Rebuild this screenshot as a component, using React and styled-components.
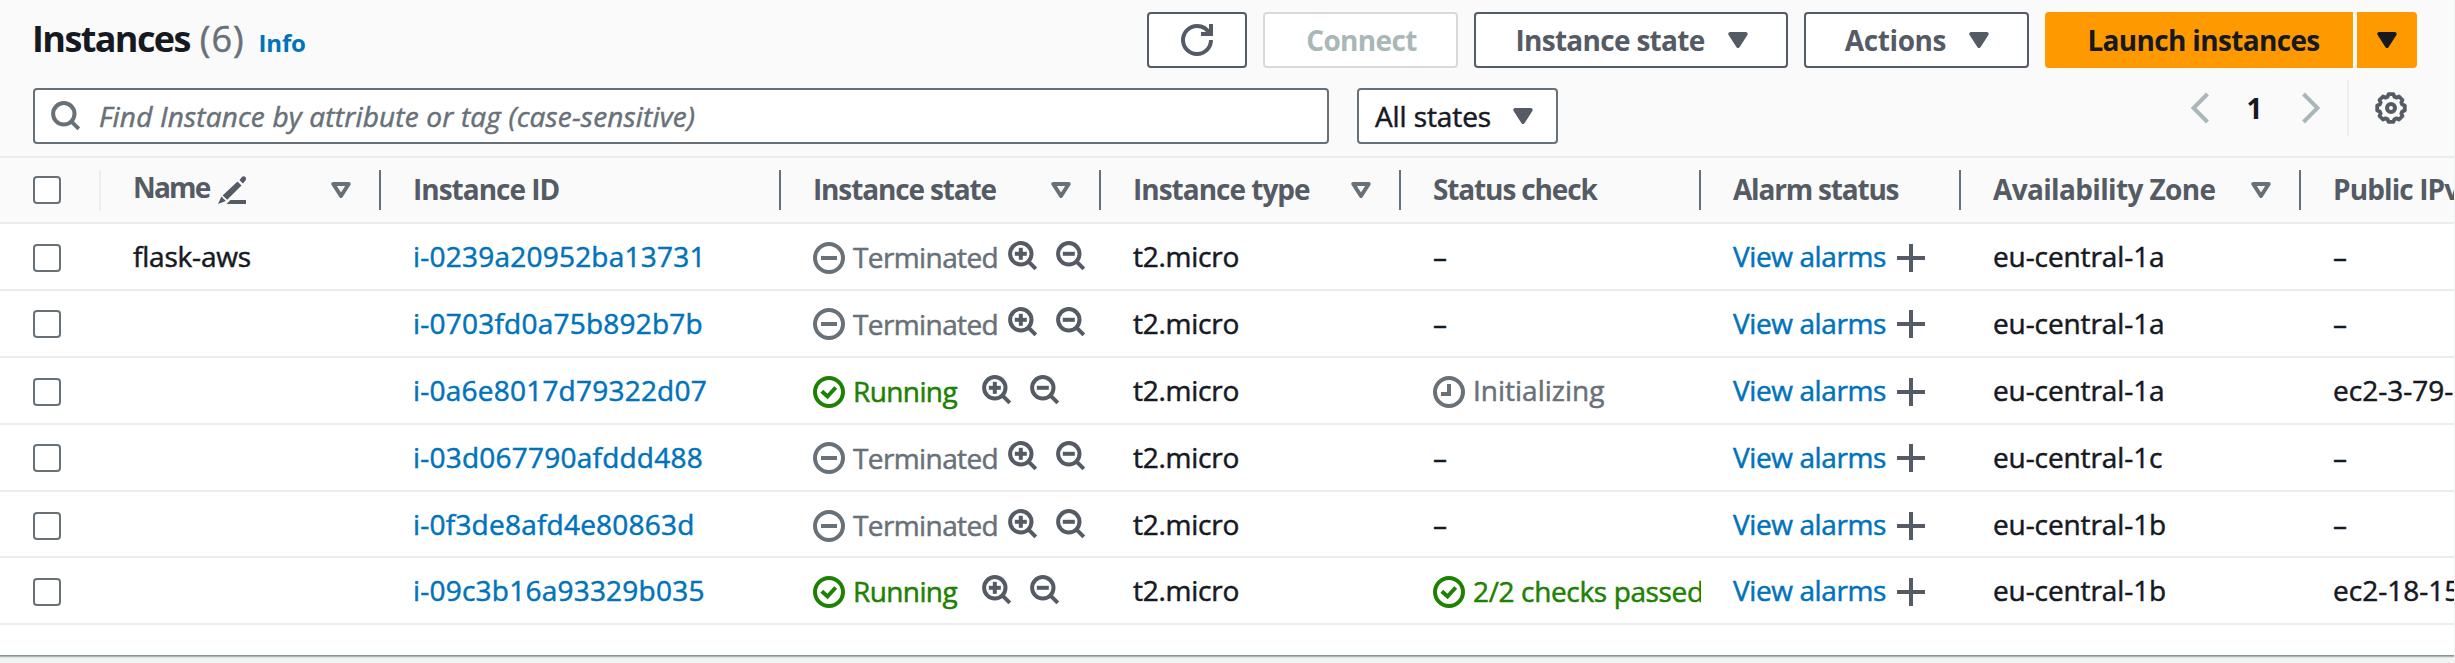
import React from "react";
import styled, { createGlobalStyle, css } from "styled-components";

const c = {
  ink: "#16191f",
  slate: "#545b64",
  gray: "#687078",
  link: "#0073bb",
  green: "#1d8102",
  orange: "#ff9900",
  line: "#eaeded",
  disabled: "#aab7b8",
  surface: "#fafafa",
};

const GlobalStyle = createGlobalStyle`
  *, *::before, *::after { box-sizing: border-box; }
  body {
    margin: 0;
    overflow: hidden;
    background: #f2f3f3;
    color: ${c.ink};
    font-family: "Open Sans", "Noto Sans", sans-serif;
    font-size: 28px;
    line-height: 38px;
  }
`;

const regularWeight = css`
  -webkit-text-stroke: 0.5px currentColor;
`;

const Page = styled.div`
  width: 2455px;
  height: 663px;
  overflow: hidden;
  border-right: 1px solid #f0f1f1;
`;

const Panel = styled.section`
  width: 2455px;
  height: 655px;
  background: #fff;
  box-shadow: 0 1px 0 #879596, 0 2px 0 #aab7b8, 0 3px 0 #e0e4e4;
`;

const Header = styled.header`
  display: flex;
  flex-direction: column;
  gap: 20px;
  padding: 12px 38px 12px 33px;
  background: ${c.surface};
  border-bottom: 2px solid ${c.line};
`;

const HeaderRow = styled.div`
  display: flex;
  height: 56px;
  align-items: flex-start;
  justify-content: space-between;
`;

const TitleGroup = styled.div`
  display: flex;
  align-items: baseline;
  margin: 2px 0 0 -1px;
  line-height: 50px;
`;

const Title = styled.h1`
  margin: 0;
  font-size: 36px;
  font-weight: 700;
  letter-spacing: -1.6px;
`;

const Counter = styled.span`
  margin-left: 10px;
  font-size: 36px;
  letter-spacing: 1px;
  color: ${c.gray};
  ${regularWeight}
`;

const InfoLink = styled.a`
  margin-left: 14px;
  font-size: 24px;
  font-weight: 700;
  letter-spacing: -0.2px;
  color: ${c.link};
`;

const Actions = styled.div`
  display: flex;
  gap: 16px;
`;

const Button = styled.button`
  display: flex;
  align-items: center;
  justify-content: center;
  gap: 24px;
  width: ${(p) => p.$w}px;
  height: 56px;
  padding: 0;
  border: 2px solid ${c.slate};
  border-radius: 4px;
  background: #fff;
  color: ${c.slate};
  font: inherit;
  font-weight: 700;
  ${(p) =>
    p.$disabled &&
    css`
      border-color: #d5dbdb;
      color: ${c.disabled};
    `}
`;

const SplitButton = styled.div`
  display: flex;
  gap: 4px;
`;

const PrimaryButton = styled(Button)`
  border: 0;
  padding-left: ${(p) => (p.$caret ? 0 : 7)}px;
  background: ${c.orange};
  color: ${c.ink};
  border-radius: ${(p) => (p.$caret ? "0 4px 4px 0" : "4px 0 0 4px")};
`;

const Label = styled.span`
  margin: 0 -1px 1px 1px;
  white-space: nowrap;
  letter-spacing: ${(p) => p.$track || 0}px;
`;

const Filters = styled.div`
  display: flex;
  gap: 28px;
`;

const SearchBox = styled.div`
  display: flex;
  align-items: center;
  gap: 18px;
  width: 1296px;
  height: 56px;
  padding-left: 16px;
  border: 2px solid ${c.gray};
  border-radius: 4px;
  background: #fff;
  color: ${c.gray};
`;

const Placeholder = styled.span`
  font-style: italic;
  letter-spacing: 0.18px;
  ${regularWeight}
`;

const StateSelect = styled.div`
  display: flex;
  align-items: center;
  justify-content: space-between;
  width: 201px;
  height: 56px;
  padding: 0 23px 0 15px;
  border: 2px solid ${c.gray};
  border-radius: 4px;
  background: #fff;
  ${regularWeight}

  svg {
    color: ${c.slate};
  }
`;

const Pagination = styled.nav`
  display: flex;
  align-items: center;
  height: 56px;
  margin: -8px 10px 0 0;
  color: ${c.disabled};
`;

const PageNumber = styled.span`
  width: 93px;
  margin-bottom: 1px;
  padding-right: 2px;
  text-align: center;
  font-weight: 700;
  color: ${c.ink};
`;

const Preferences = styled.div`
  display: flex;
  align-items: center;
  height: 56px;
  margin-left: 27px;
  padding-left: 26px;
  border-left: 2px solid ${c.line};
  color: ${c.slate};
`;

const columns = css`
  display: grid;
  grid-template-columns: 101px 280px 400px 320px 300px 300px 260px 340px 154px;
`;

const HeadRow = styled.div`
  ${columns}
  height: 66px;
  padding: 12px 0;
  background: ${c.surface};
  border-bottom: 2px solid ${c.line};
`;

const HeadCell = styled.div`
  display: flex;
  align-items: flex-start;
  justify-content: space-between;
  padding: 0 28px 0 32px;
  overflow: hidden;
  white-space: nowrap;
  font-weight: 700;
  letter-spacing: ${(p) => p.$track}px;
  color: ${c.slate};
  border-right: 2px solid ${c.gray};

  &:last-child {
    border-right: 0;
    padding-right: 0;
  }
`;

const NameLabel = styled.span`
  display: flex;
  gap: 8px;
  line-height: 34px;

  svg {
    margin-top: 6px;
  }
`;

const SelectHeadCell = styled.div`
  padding: 6px 0 0 33px;
  border-right: 2px solid ${c.line};
`;

const SortIcon = styled.svg`
  flex: none;
  margin-top: 12px;
  color: ${c.gray};
`;

const Row = styled.div`
  ${columns}
  height: ${(p) => p.$h}px;
  border-bottom: 2px solid ${c.line};
`;

const Cell = styled.div`
  display: flex;
  align-items: flex-start;
  padding: 13px 0 0 32px;
  overflow: hidden;
  white-space: nowrap;
  letter-spacing: ${(p) => p.$track || 0}px;
  ${regularWeight}
`;

const SelectCell = styled.div`
  padding: ${(p) => (p.$raised ? 19 : 20)}px 0 0 33px;
`;

const Checkbox = styled.div`
  width: 28px;
  height: 28px;
  border: 2px solid ${c.gray};
  border-radius: 4px;
  background: #fff;
`;

const Link = styled.a`
  color: ${c.link};
`;

const Status = styled.span`
  display: flex;
  gap: 8px;
  color: ${(p) => (p.$ok ? c.green : c.gray)};
  letter-spacing: ${(p) => p.$track}px;

  svg {
    flex: none;
    margin-top: ${(p) => (p.$raised ? 4 : 5)}px;
  }
`;

const StatusText = styled.span`
  padding-top: ${(p) => (p.$low ? 1 : 0)}px;
`;

const FilterTools = styled.span`
  display: flex;
  gap: 18px;
  margin: ${(p) => (p.$raised ? 3 : 4)}px 0 0 ${(p) => p.$offset}px;
  color: ${c.slate};
`;

const AddIcon = styled.svg`
  margin: ${(p) => (p.$raised ? 6 : 7)}px 0 0 11px;
  color: ${c.slate};
`;

const Caret = () => (
  <svg width="20" height="16" viewBox="0 0 20 16" fill="currentColor" stroke="currentColor" strokeWidth="4" strokeLinejoin="round">
    <path d="M2.3 2h15.4L10 14z" />
  </svg>
);

const Sort = () => (
  <SortIcon width="20" height="16" viewBox="0 0 20 16" fill="none" stroke="currentColor" strokeWidth="4" strokeLinejoin="round">
    <path d="M2.3 2h15.4L10 14z" />
  </SortIcon>
);

const Refresh = () => (
  <svg width="32" height="32" viewBox="0 0 16 16" fill="none" stroke="currentColor" strokeWidth="2">
    <path d="M15 8c0 3.87-3.13 7-7 7s-7-3.13-7-7 3.13-7 7-7c2.79 0 5.2 1.63 6.33 4" />
    <path d="M10 5h5V0" />
  </svg>
);

const Magnifier = ({ sign }) => (
  <svg width="30" height="30" viewBox="0 0 30 30" fill="none" stroke="currentColor" strokeWidth="4">
    <circle cx="12.8" cy="12.8" r="10.7" />
    <path d="M20.3 20.3l7.5 7.5" />
    {sign && <path d="M6.8 12.8h12" />}
    {sign === "+" && <path d="M12.8 6.8v12" />}
  </svg>
);

const Pencil = () => (
  <svg width="28" height="28" viewBox="0 0 28 28" fill="currentColor">
    <path d="M21.500 4.200l2-2.800q2-2.200 3.900-.4 1.200 1.700 0 3.400L25 7.400z" />
    <path d="M19.500 5.600l4 3.800L9.200 23.800 4.600 19.400z" />
    <path d="M3.400 20.600l4.400 4.300L0 28z" />
    <path d="M12.500 24H28v4H8.500z" />
  </svg>
);

const gearPath =
  Array.from({ length: 8 }, (_, i) =>
    [
      [-10, 14],
      [10, 14],
      [17, 11.7],
      [28, 11.7],
    ]
      .map(([deg, r]) => {
        const a = ((i * 45 + deg) * Math.PI) / 180;
        return `${(16 + r * Math.sin(a)).toFixed(2)} ${(16 - r * Math.cos(a)).toFixed(2)}`;
      })
      .join("L")
  ).join("L");

const Gear = () => (
  <svg width="32" height="32" viewBox="0 0 32 32" fill="none" stroke="currentColor" strokeWidth="4" strokeLinejoin="round">
    <path d={`M${gearPath}Z`} strokeWidth="3.8" />
    <circle cx="16" cy="16" r="4" />
  </svg>
);

const Chevron = ({ right }) => (
  <svg width="18" height="32" viewBox="0 0 18 32" fill="none" stroke="currentColor" strokeWidth="4">
    <path d={right ? "M1.500 2L15.500 16 1.500 30" : "M16.500 2L2.500 16l14 14"} />
  </svg>
);

const glyphs = {
  minus: "M8 16h16",
  check: "M8.800 15.200l5.700 5.300 8.200-9",
  clock: "M16 8v10H8",
};

const CircleIcon = ({ kind }) => (
  <svg width="32" height="32" viewBox="0 0 32 32" fill="none" stroke="currentColor" strokeWidth="4">
    <circle cx="16" cy="16" r="14" />
    <path d={glyphs[kind]} />
  </svg>
);

const headings = [
  { text: "Instance ID", track: -1 },
  { text: "Instance state", track: -1.15, sort: true },
  { text: "Instance type", track: -1, sort: true },
  { text: "Status check", track: -1.13 },
  { text: "Alarm status", track: -1.2 },
  { text: "Availability Zone", track: -0.65, sort: true },
  { text: "Public IPv4 DNS", track: -0.9 },
];

const instances = [
  { name: "flask-aws", id: "i-0239a20952ba13731", zone: "eu-central-1a", dns: "–", h: 67 },
  { id: "i-0703fd0a75b892b7b", zone: "eu-central-1a", dns: "–", h: 67, raised: true },
  { id: "i-0a6e8017d79322d07", running: true, check: "init", zone: "eu-central-1a", dns: "ec2-3-79-", h: 67 },
  { id: "i-03d067790afddd488", zone: "eu-central-1c", dns: "–", h: 67, raised: true },
  { id: "i-0f3de8afd4e80863d", zone: "eu-central-1b", dns: "–", h: 66 },
  { id: "i-09c3b16a93329b035", running: true, check: "passed", zone: "eu-central-1b", dns: "ec2-18-15", h: 67 },
];

function InstanceState({ running, raised }) {
  return (
    <>
      <Status $ok={running} $raised={raised} $track={-0.6}>
        <CircleIcon kind={running ? "check" : "minus"} />
        <StatusText $low>{running ? "Running" : "Terminated"}</StatusText>
      </Status>
      <FilterTools $raised={raised} $offset={running ? 25 : 10}>
        <Magnifier sign="+" />
        <Magnifier sign="-" />
      </FilterTools>
    </>
  );
}

function StatusCheck({ check }) {
  if (!check) return "–";
  const passed = check === "passed";
  return (
    <Status $ok={passed} $track={passed ? -0.36 : 0}>
      <CircleIcon kind={passed ? "check" : "clock"} />
      <StatusText $low={passed}>{passed ? "2/2 checks passed" : "Initializing"}</StatusText>
    </Status>
  );
}

function InstanceRow({ item }) {
  return (
    <Row $h={item.h}>
      <SelectCell $raised={item.raised}>
        <Checkbox />
      </SelectCell>
      <Cell $track={-0.2}>{item.name}</Cell>
      <Cell $track={0.22}>
        <Link>{item.id}</Link>
      </Cell>
      <Cell>
        <InstanceState running={item.running} raised={item.raised} />
      </Cell>
      <Cell $track={-0.25}>t2.micro</Cell>
      <Cell>
        <StatusCheck check={item.check} />
      </Cell>
      <Cell $track={-0.4}>
        <Link>View alarms</Link>
        <AddIcon $raised={item.raised} width="28" height="28" viewBox="0 0 28 28" fill="none" stroke="currentColor" strokeWidth="4">
          <path d="M0 14h28M14 0v28" />
        </AddIcon>
      </Cell>
      <Cell $track={-0.1}>{item.zone}</Cell>
      <Cell>{item.dns}</Cell>
    </Row>
  );
}

export default function App() {
  return (
    <Page>
      <GlobalStyle />
      <Panel>
        <Header>
          <HeaderRow>
            <TitleGroup>
              <Title>Instances</Title>
              <Counter>(6)</Counter>
              <InfoLink>Info</InfoLink>
            </TitleGroup>
            <Actions>
              <Button $w={100}>
                <Refresh />
              </Button>
              <Button $w={195} $disabled>
                <Label $track={-0.65}>Connect</Label>
              </Button>
              <Button $w={314}>
                <Label $track={-0.7}>Instance state</Label>
                <Caret />
              </Button>
              <Button $w={225}>
                <Label $track={-0.4}>Actions</Label>
                <Caret />
              </Button>
              <SplitButton>
                <PrimaryButton $w={308}>
                  <Label $track={-0.67}>Launch instances</Label>
                </PrimaryButton>
                <PrimaryButton $w={60} $caret>
                  <Caret />
                </PrimaryButton>
              </SplitButton>
            </Actions>
          </HeaderRow>
          <HeaderRow>
            <Filters>
              <SearchBox>
                <Magnifier />
                <Placeholder>Find Instance by attribute or tag (case-sensitive)</Placeholder>
              </SearchBox>
              <StateSelect>
                <Label $track={-0.1}>All states</Label>
                <Caret />
              </StateSelect>
            </Filters>
            <Pagination>
              <Chevron />
              <PageNumber>1</PageNumber>
              <Chevron right />
              <Preferences>
                <Gear />
              </Preferences>
            </Pagination>
          </HeaderRow>
        </Header>
        <HeadRow>
          <SelectHeadCell>
            <Checkbox />
          </SelectHeadCell>
          <HeadCell $track={-1.8}>
            <NameLabel>
              Name <Pencil />
            </NameLabel>
            <Sort />
          </HeadCell>
          {headings.map((h) => (
            <HeadCell key={h.text} $track={h.track}>
              {h.text}
              {h.sort && <Sort />}
            </HeadCell>
          ))}
        </HeadRow>
        {instances.map((item) => (
          <InstanceRow key={item.id} item={item} />
        ))}
      </Panel>
    </Page>
  );
}
